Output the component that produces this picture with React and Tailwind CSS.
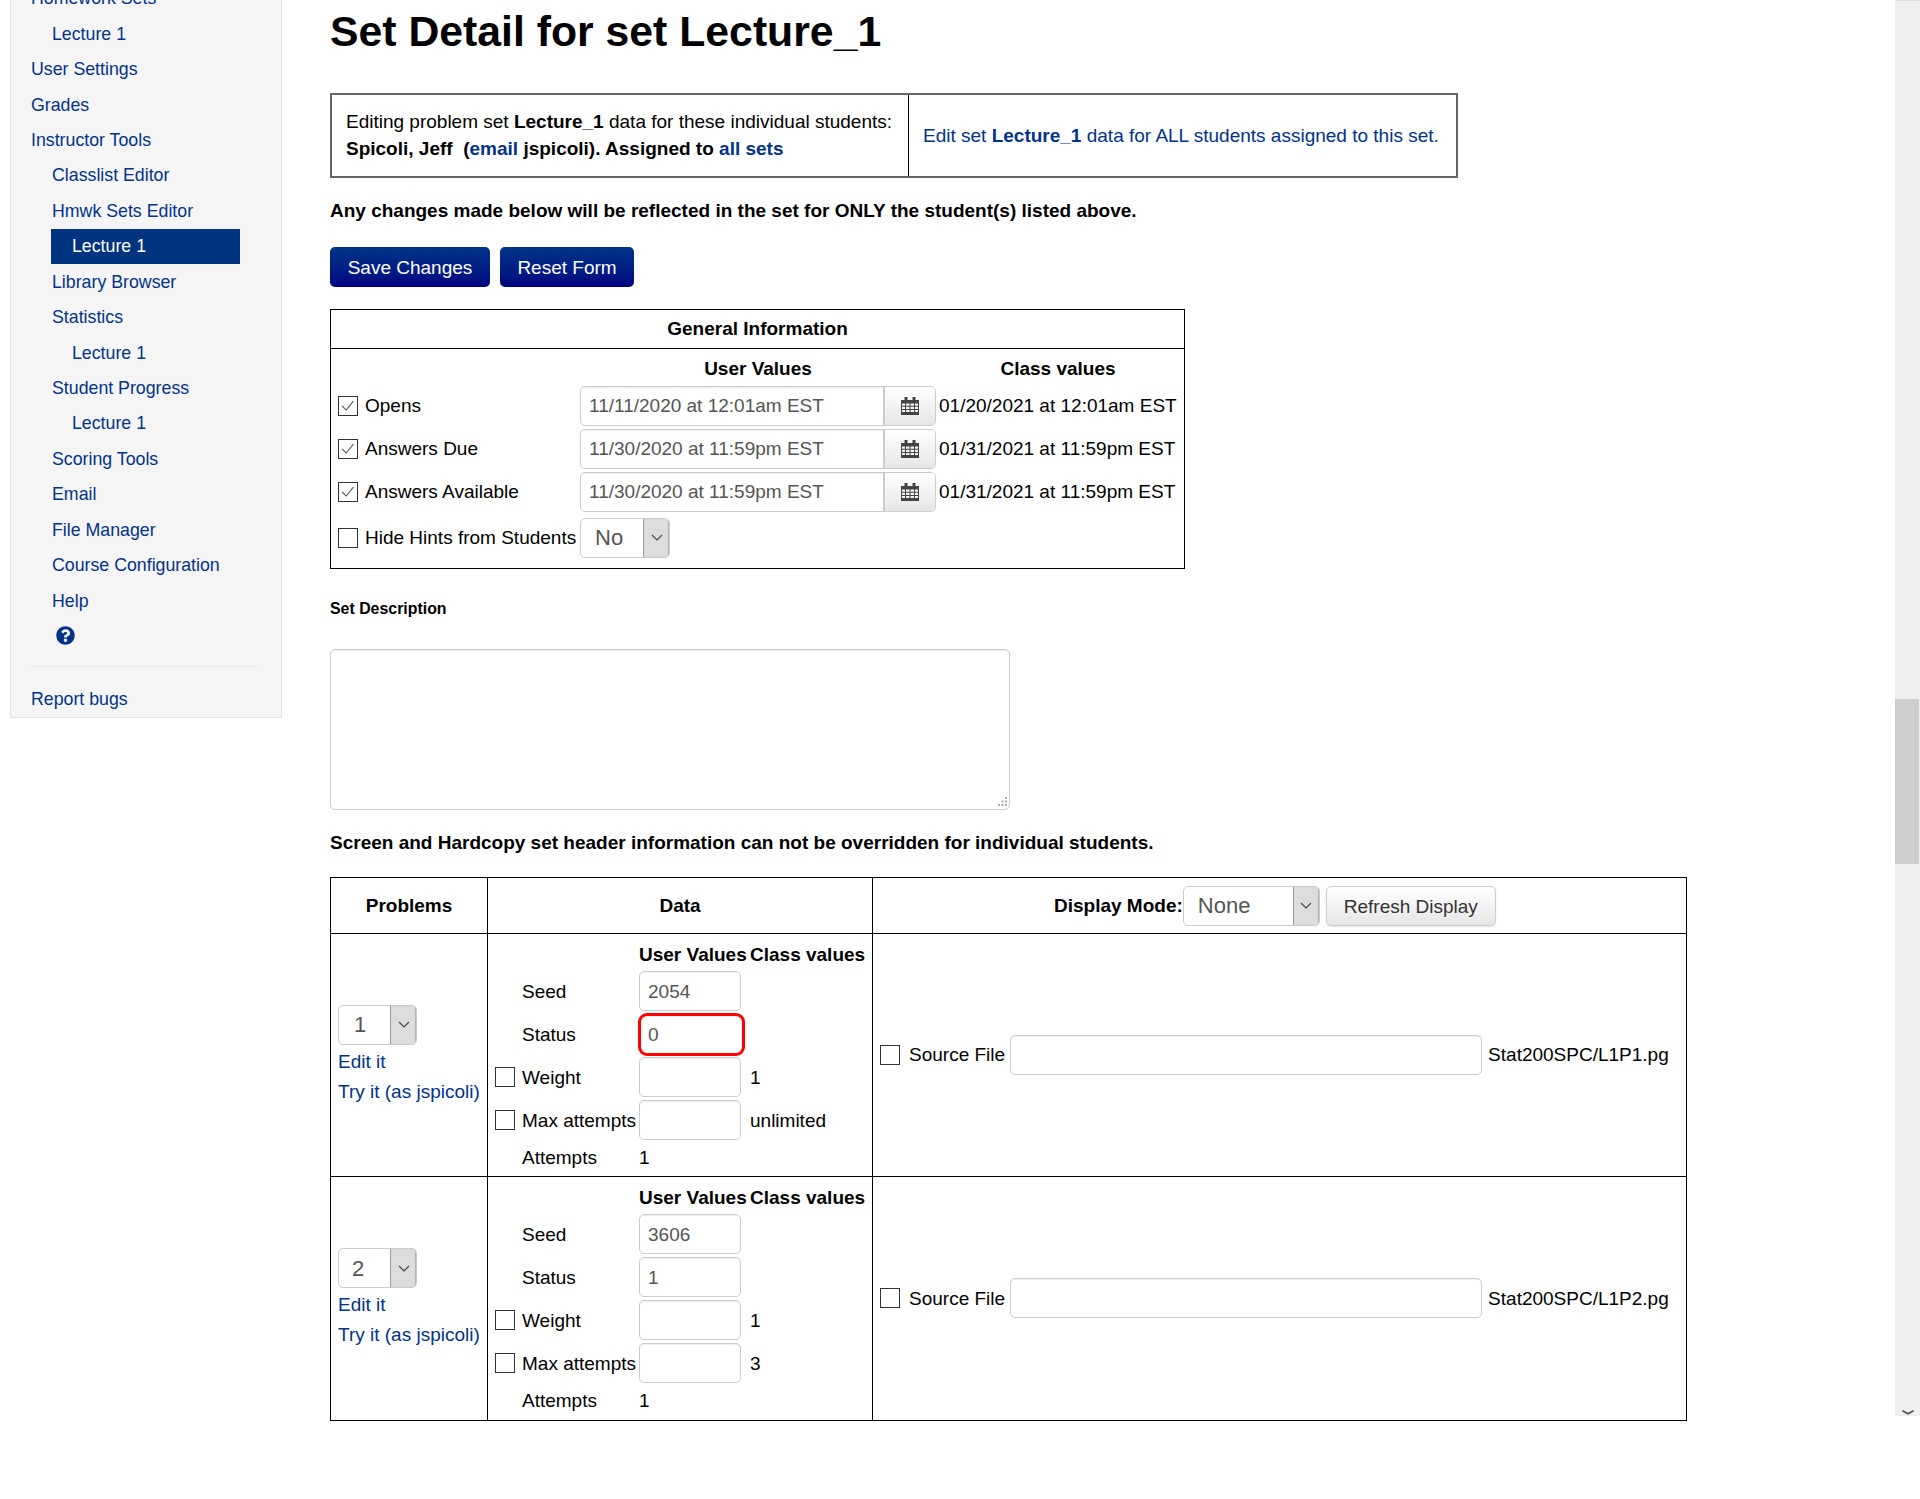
import React from 'react';
import { FaQuestionCircle } from 'react-icons/fa';

const navItems = [
  { label: 'Homework Sets', level: 0 },
  { label: 'Lecture 1', level: 1 },
  { label: 'User Settings', level: 0 },
  { label: 'Grades', level: 0 },
  { label: 'Instructor Tools', level: 0 },
  { label: 'Classlist Editor', level: 1 },
  { label: 'Hmwk Sets Editor', level: 1 },
  { label: 'Lecture 1', level: 2, active: true },
  { label: 'Library Browser', level: 1 },
  { label: 'Statistics', level: 1 },
  { label: 'Lecture 1', level: 2 },
  { label: 'Student Progress', level: 1 },
  { label: 'Lecture 1', level: 2 },
  { label: 'Scoring Tools', level: 1 },
  { label: 'Email', level: 1 },
  { label: 'File Manager', level: 1 },
  { label: 'Course Configuration', level: 1 },
  { label: 'Help', level: 1 },
];

const indent = ['pl-[20px]', 'pl-[41px]', 'pl-[61px]'];

const Sidebar = () => (
  <aside className="-mt-[20px] ml-[10px] h-[738px] w-[272px] shrink-0 border border-[#e3e3e3] bg-[#f5f5f5] text-[17.75px]">
    <nav className="flex flex-col">
      {navItems.map((item, i) =>
        item.active ? (
          <div key={i} className="flex h-[35.45px] items-center pl-[40px]">
            <span className="flex h-[35px] w-[189px] items-center bg-[#003380] pl-[21px] text-white">{item.label}</span>
          </div>
        ) : (
          <a key={i} className={`flex h-[35.45px] items-center text-[#003388] ${indent[item.level]}`}>
            {item.label}
          </a>
        )
      )}
    </nav>
    <div className="flex h-[33px] items-center pl-[45px] text-[#003388]">
      <FaQuestionCircle className="h-[19px] w-[19px]" />
    </div>
    <div className="ml-[20px] mt-[14px] h-px w-[227px] bg-[#e5e5e5]" />
    <a className="mt-[15px] block pl-[20px] leading-[35px] text-[#003388]">Report bugs</a>
  </aside>
);

const CheckBox = ({ checked }) => (
  <span className="flex h-[20px] w-[20px] shrink-0 items-center justify-center border border-[#333] bg-white">
    {checked && (
      <svg viewBox="0 0 20 20" className="h-[18px] w-[18px]" fill="none" stroke="#555" strokeWidth="1.2">
        <path d="M3.5 10 L8 14.5 L16 4.5" />
      </svg>
    )}
  </span>
);

const CalendarIcon = () => (
  <svg viewBox="0 0 18 18" className="h-[18px] w-[18px]">
    <path fill="#444" d="M0 3h18v15H0z" />
    <path fill="#444" d="M3.5 0h3v5h-3zM11.500 0h3v5h-3z" />
    <path
      fill="#f4f4f4"
      d="M1 6.500h3v2.200H1zM5 6.500h3.500v2.200H5zM9.500 6.500H13v2.200H9.500zM14 6.500h3v2.200h-3zM1 9.700h3v2.200H1zM5 9.700h3.500v2.200H5zM9.500 9.700H13v2.200H9.500zM14 9.700h3v2.200h-3zM1 12.900h3v2H1zM5 12.900h3.500v2H5zM9.500 12.900H13v2H9.500zM14 12.900h3v2h-3z"
    />
  </svg>
);

const TextInput = ({ value, className = '' }) => (
  <div
    className={`flex h-10 items-center rounded-[5px] border border-[#ccc] bg-white px-[8px] text-[#555] shadow-[inset_0_1px_1px_rgba(0,0,0,0.075)] ${className}`}
  >
    {value}
  </div>
);

const DateRow = ({ label, value, classValue }) => (
  <div className="mt-[3px] flex h-10 items-center">
    <div className="flex w-[249px] items-center pl-[7px]">
      <CheckBox checked />
      <span className="mb-[2px] ml-[7px]">{label}</span>
    </div>
    <div className="flex h-10 w-[356px] overflow-hidden rounded-[5px] border border-[#ccc]">
      <div className="flex flex-1 items-center pb-[2px] pl-[8px] text-[#555] shadow-[inset_0_1px_1px_rgba(0,0,0,0.075)]">{value}</div>
      <div className="flex w-[52px] items-center justify-center border-l-2 border-[#ccc] bg-gradient-to-b from-white to-[#e6e6e6]">
        <CalendarIcon />
      </div>
    </div>
    <span className="mb-[2px] ml-[3px] whitespace-nowrap">{classValue}</span>
  </div>
);

const SelectBox = ({ value, width, pad }) => (
  <div className={`flex h-10 items-stretch overflow-hidden rounded-[5px] border border-[#ccc] bg-white text-[22px] text-[#555] ${width}`}>
    <div className={`flex flex-1 items-center ${pad}`}>{value}</div>
    <div className="flex w-[26px] items-center justify-center border-l border-[#999] bg-[#ddd] shadow-[inset_-1px_0_1px_rgba(0,0,0,0.2)]">
      <svg viewBox="0 0 12 7" className="h-[7px] w-[12px]" fill="none" stroke="#444" strokeWidth="1.1">
        <path d="M1 1l5 5 5-5" />
      </svg>
    </div>
  </div>
);

const GeneralInfo = () => (
  <div className="mt-[22px] h-[260px] w-[855px] border border-black">
    <div className="flex h-[39px] items-center justify-center border-b border-black pb-[2px] font-bold">General Information</div>
    <div className="flex h-[34px] items-center pt-[4px]">
      <b className="ml-[249px] w-[356px] text-center">User Values</b>
      <b className="ml-[6px] w-[232px] text-center">Class values</b>
    </div>
    <DateRow label="Opens" value="11/11/2020 at 12:01am EST" classValue="01/20/2021 at 12:01am EST" />
    <DateRow label="Answers Due" value="11/30/2020 at 11:59pm EST" classValue="01/31/2021 at 11:59pm EST" />
    <DateRow label="Answers Available" value="11/30/2020 at 11:59pm EST" classValue="01/31/2021 at 11:59pm EST" />
    <div className="mt-[5px] flex h-[41px] items-center">
      <div className="flex w-[249px] items-center pl-[7px]">
        <CheckBox />
        <span className="ml-[7px] whitespace-nowrap">Hide Hints from Students</span>
      </div>
      <SelectBox value="No" width="w-[90px]" pad="pl-[14px]" />
    </div>
  </div>
);

const ProblemRow = ({ num, seed, status, statusError, maxClass, numPad, fileName, lastRow }) => (
  <div className={`grid h-[243px] grid-cols-[157px_385px_1fr] ${lastRow ? '' : 'border-b border-black'}`}>
    <div className="flex flex-col justify-center border-r border-black pl-[7px]">
      <div className="mt-[1px]">
        <SelectBox value={num} width="w-[79px]" pad={numPad} />
        <a className="mt-[2px] block leading-[30px] text-[#003388]">Edit it</a>
        <a className="block whitespace-nowrap leading-[30px] text-[#003388]">Try it (as jspicoli)</a>
      </div>
    </div>
    <div className="border-r border-black pl-[7px]">
      <div className="flex h-[37px] items-center pt-[3px] font-bold">
        <span className="ml-[144px] w-[111px] whitespace-nowrap">User Values</span>
        <span className="whitespace-nowrap">Class values</span>
      </div>
      <div className="flex h-[43px] items-start">
        <span className="ml-[27px] flex h-10 w-[117px] items-center">Seed</span>
        <TextInput value={seed} className="w-[102px]" />
      </div>
      <div className="flex h-[43px] items-start">
        <span className="ml-[27px] flex h-10 w-[117px] items-center">Status</span>
        {statusError ? (
          <TextInput value={status} className="-ml-[1px] -mt-[1px] h-[43px] w-[107px] rounded-[9px] border-[3px] border-[#f00] pl-[7px]" />
        ) : (
          <TextInput value={status} className="w-[102px]" />
        )}
      </div>
      <div className="flex h-[43px] items-start">
        <span className="flex h-10 w-[27px] items-center"><CheckBox /></span>
        <span className="flex h-10 w-[117px] items-center whitespace-nowrap">Weight</span>
        <TextInput className="w-[102px]" />
        <span className="ml-[9px] flex h-10 items-center">1</span>
      </div>
      <div className="flex h-[43px] items-start">
        <span className="flex h-10 w-[27px] items-center"><CheckBox /></span>
        <span className="flex h-10 w-[117px] items-center whitespace-nowrap">Max attempts</span>
        <TextInput className="w-[102px]" />
        <span className="ml-[9px] flex h-10 items-center">{maxClass}</span>
      </div>
      <div className="flex h-[28px] items-center">
        <span className="ml-[27px] w-[117px]">Attempts</span>
        <span>1</span>
      </div>
    </div>
    <div className="flex items-center pb-[1px] pl-[7px]">
      <CheckBox />
      <span className="ml-[9px] whitespace-nowrap">Source File</span>
      <TextInput className="ml-[5px] w-[472px]" />
      <span className="ml-[6px] whitespace-nowrap">{fileName}</span>
    </div>
  </div>
);

const ProblemsTable = () => (
  <div className="mt-[22px] w-[1357px] border border-black">
    <div className="grid h-[56px] grid-cols-[157px_385px_1fr] border-b border-black">
      <div className="flex items-center justify-center border-r border-black font-bold">Problems</div>
      <div className="flex items-center justify-center border-r border-black font-bold">Data</div>
      <div className="flex items-center pl-[181px]">
        <b className="whitespace-nowrap">Display Mode:</b>
        <SelectBox value="None" width="w-[137px]" pad="pl-[14px]" />
        <button className="ml-[6px] mt-[1px] h-10 w-[170px] rounded-[5px] border border-[#ccc] bg-gradient-to-b from-white to-[#e6e6e6] text-[#333] shadow-[0_1px_2px_rgba(0,0,0,0.1)]">
          Refresh Display
        </button>
      </div>
    </div>
    <ProblemRow num="1" numPad="pl-[15px]" seed="2054" status="0" statusError maxClass="unlimited" fileName="Stat200SPC/L1P1.pg" />
    <ProblemRow num="2" numPad="pl-[13px]" seed="3606" status="1" maxClass="3" fileName="Stat200SPC/L1P2.pg" lastRow />
  </div>
);

const Scrollbar = () => (
  <div className="flex h-[1416px] w-[25px] shrink-0 flex-col border-t border-[#ddd] bg-[#efefef]">
    <div className="h-[698px]" />
    <div className="h-[165px] w-[24px] bg-[#cdcdcd]" />
    <div className="flex flex-1 items-end justify-center pb-[1px]">
      <svg viewBox="0 0 12 5" className="h-[5px] w-[12px]" fill="none" stroke="#505050" strokeWidth="1.6">
        <path d="M0.5 0.8L6 3.8l5.5-3" />
      </svg>
    </div>
  </div>
);

export default function App() {
  return (
    <div className="flex h-[1499px] w-[1920px] overflow-hidden bg-white font-['Liberation_Sans',Arial,sans-serif] text-[19px] leading-[25px] text-black">
      <Sidebar />
      <main className="ml-[48px] w-[1500px] shrink-0">
        <h1 className="mt-[6px] text-[42.75px] font-bold leading-[50px]">Set Detail for set Lecture_1</h1>
        <div className="mt-[37px] flex h-[85px] w-[1128px] border-2 border-[#666]">
          <div className="flex w-[577px] flex-col justify-center whitespace-nowrap border-r border-black pb-[1px] pl-[14px] leading-[27px]">
            <div>
              Editing problem set <b>Lecture_1</b> data for these individual students:
            </div>
            <b>
              Spicoli, Jeff&nbsp; (<a className="text-[#003388]">email</a> jspicoli). Assigned to <a className="text-[#003388]">all sets</a>
            </b>
          </div>
          <a className="flex flex-1 items-center whitespace-nowrap pl-[14px] text-[#003388]">
            Edit set&nbsp;<b>Lecture_1</b>&nbsp;data for ALL students assigned to this set.
          </a>
        </div>
        <p className="mt-[20px] font-bold leading-[25px]">Any changes made below will be reflected in the set for ONLY the student(s) listed above.</p>
        <div className="mt-[24px] flex gap-[10px]">
          <button className="h-10 w-[160px] rounded-[5px] bg-gradient-to-b from-[#003388] to-[#000080] text-white">Save Changes</button>
          <button className="h-10 w-[134px] rounded-[5px] bg-gradient-to-b from-[#003388] to-[#000080] text-white">Reset Form</button>
        </div>
        <GeneralInfo />
        <p className="mt-[27px] text-[15.9px] font-bold leading-[25px]">Set Description</p>
        <div className="relative mt-[28px] h-[161px] w-[680px] rounded-[5px] border border-[#ccc] shadow-[inset_0_1px_1px_rgba(0,0,0,0.075)]">
          <svg viewBox="0 0 12 12" className="absolute bottom-[1px] right-[1px] h-[12px] w-[12px]" fill="#aaa">
            <path d="M9 1h2v2H9zM5.500 4.500h2v2h-2zM9 4.500h2v2H9zM2 8h2v2H2zM5.500 8h2v2h-2zM9 8h2v2H9z" />
          </svg>
        </div>
        <p className="mt-[20px] font-bold leading-[25px]">Screen and Hardcopy set header information can not be overridden for individual students.</p>
        <ProblemsTable />
      </main>
      <div className="ml-auto">
        <Scrollbar />
      </div>
    </div>
  );
}
